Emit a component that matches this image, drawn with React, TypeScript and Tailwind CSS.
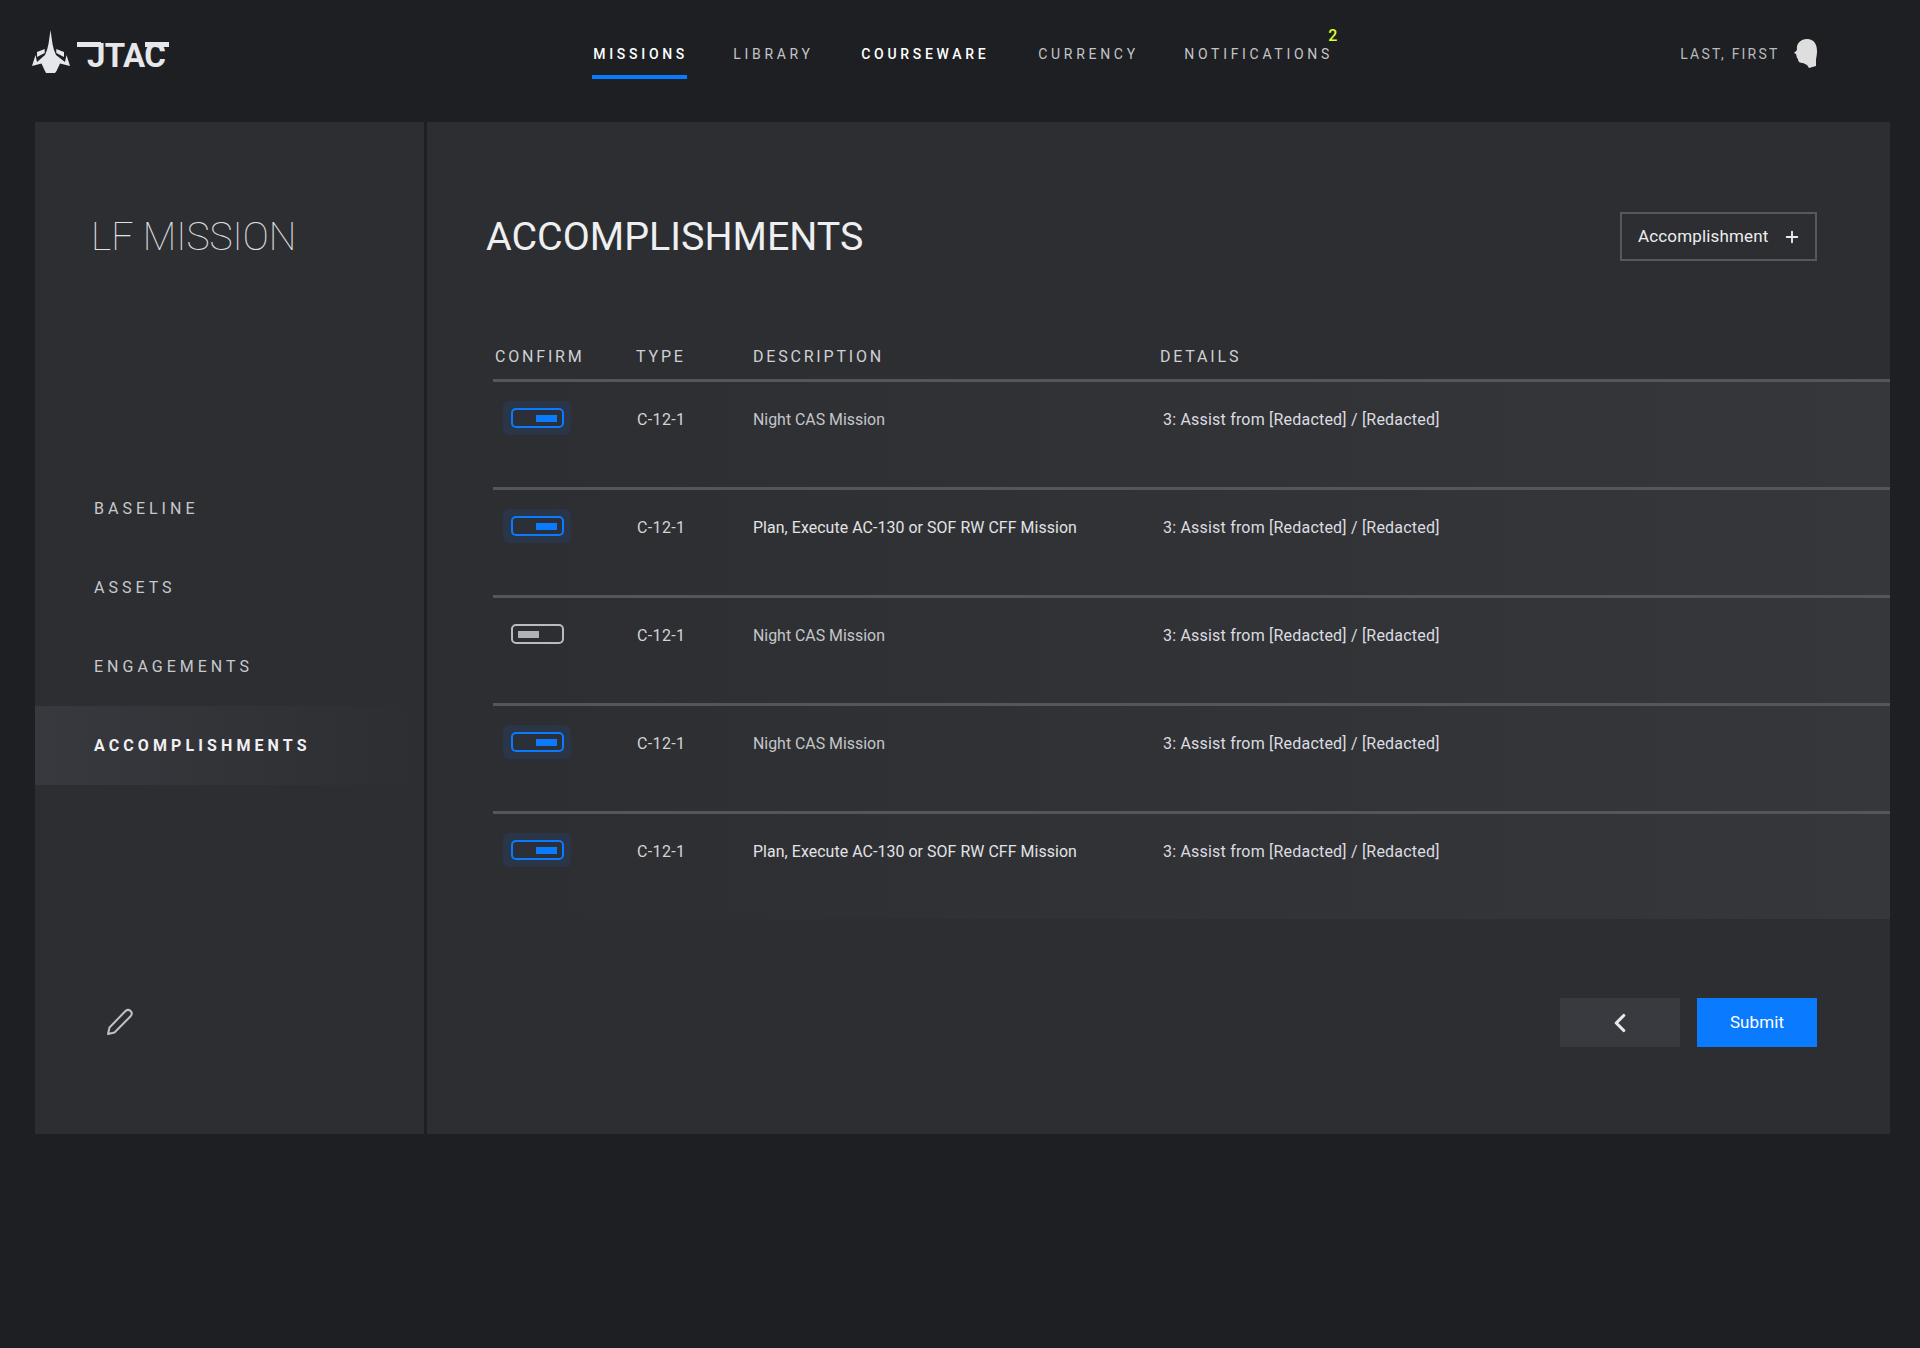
import React from 'react';
import { Plus, ChevronLeft } from 'lucide-react';

const FONT = "font-['Roboto',sans-serif]";

const navItems = [
  { label: 'MISSIONS', className: 'w-[94px] font-medium text-white' },
  { label: 'LIBRARY', className: 'w-[82px] text-[#c4c5c8]' },
  { label: 'COURSEWARE', className: 'w-[131px] font-medium text-white' },
  { label: 'CURRENCY', className: 'w-[100px] text-[#c4c5c8]' },
  { label: 'NOTIFICATIONS', className: 'w-[149px] text-[#c4c5c8]' },
];

const sideItems = ['BASELINE', 'ASSETS', 'ENGAGEMENTS'];

const rows = [
  { on: true, desc: 'Night CAS Mission', dim: true },
  { on: true, desc: 'Plan, Execute AC-130 or SOF RW CFF Mission', dim: false },
  { on: false, desc: 'Night CAS Mission', dim: true },
  { on: true, desc: 'Night CAS Mission', dim: true },
  { on: true, desc: 'Plan, Execute AC-130 or SOF RW CFF Mission', dim: false },
];

const Toggle: React.FC<{ on: boolean }> = ({ on }) => (
  <div
    className={`flex h-[34px] w-[68px] items-center justify-center rounded-[6px] ${
      on ? 'bg-[#2a3547]' : ''
    }`}
  >
    <div
      className={`flex h-[20px] w-[53px] items-center rounded-[5px] border-2 px-[5px] ${
        on ? 'justify-end border-[#0a7aff] bg-[#2b3038]' : 'justify-start border-[#b9bbbf]'
      }`}
    >
      <div className={`h-[7px] w-[21px] ${on ? 'bg-[#0a7aff]' : 'bg-[#b0b2b6]'}`} />
    </div>
  </div>
);

const Logo = () => (
  <div className="flex items-center">
    <svg width="38" height="43" viewBox="0 0 38 43" className="text-[#e6e7ea]">
      <path
        fill="currentColor"
        d="M18.5 0 L20.5 14 L22 20 L24 25 L33 32 L34.5 25 L38 36 L28 33.5 L24.5 41 L23 43 L14 43 L12 39 L9.5 33.5 L0 36 L3.5 25 L5 32 L13 25 L15 20 L16.5 14 Z"
      />
      <path fill="currentColor" d="M5 22 L12.7 19 L12.7 23 L5 27 Z M32 22 L24.3 19 L24.3 23 L32 27 Z" />
    </svg>
    <span className="relative mt-[7px] ml-[7px] text-[33px] leading-none font-bold tracking-[-0.6px] text-[#e6e7ea] font-['Roboto',sans-serif]">
      <span className="ml-[10px]">JTAC</span>
      <span className="absolute top-[3px] left-0 h-[5px] w-[24px] bg-[#e6e7ea]" />
      <span className="absolute top-[3px] right-[-4px] h-[5px] w-[24px] bg-[#e6e7ea]" />
    </span>
  </div>
);

const Head = () => (
  <svg width="24" height="30" viewBox="0 0 24 30">
    <path
      fill="#dedede"
      d="M3 11 C2 4 7 0 13 0 C20 0 23 5 23 12 C23 17 22 19 22 22 L22 27 L15 29 L13 26 L9 24 C6 24 4 23 4 20 L3 19 L2 15 L0 14 Z"
    />
  </svg>
);

const Pencil = () => (
  <svg width="28" height="28" viewBox="0 0 28 28" fill="none" stroke="#bfc0c3" strokeWidth="2">
    <path d="M2 26 L3.5 19.5 L19.5 3 C21 1.6 23 1.6 24.6 3 C26 4.4 26 6.5 24.8 8 L8.5 24.5 Z" strokeLinejoin="round" />
  </svg>
);

export default function App() {
  return (
    <div className={`h-[1348px] w-[1920px] bg-[#1e1f23] ${FONT}`}>
      {/* Top bar */}
      <header className="relative flex h-[122px] items-start pt-[30px] pl-[32px]">
        <Logo />
        <nav className="ml-[428px] flex gap-[46px] pt-[14px]">
          {navItems.map((item, i) => (
            <div
              key={item.label}
              className={`relative pb-[15px] text-[14px] leading-[20px] tracking-[3.7px] whitespace-nowrap ${item.className}`}
            >
              {item.label}
              {i === 0 && <div className="absolute right-[0px] bottom-0 left-[-1px] h-[4px] bg-[#0a7aff]" />}
              {i === 4 && (
                <span className="absolute top-[-15px] right-[-4px] text-[16px] leading-[14px] font-medium tracking-normal text-[#dfff2a]">
                  2
                </span>
              )}
            </div>
          ))}
        </nav>
        <div className="ml-[347px] flex items-center gap-[14px] pt-[9px]">
          <span className="text-[14px] leading-[20px] tracking-[2.2px] whitespace-nowrap text-[#b9babd]">
            LAST, FIRST
          </span>
          <Head />
        </div>
      </header>

      {/* Card */}
      <div className="ml-[35px] flex h-[1012px] w-[1855px] bg-[#2d2e32]">
        <aside className="flex w-[389px] shrink-0 flex-col">
          <h2 className="mt-[91px] ml-[56px] text-[39px] leading-[48px] font-thin text-[#e2e3e5]">
            LF MISSION
          </h2>
          <div className="mt-[208px] flex flex-col">
            {sideItems.map((label) => (
              <div key={label} className="flex h-[79px] items-center pl-[59px] text-[16px] tracking-[4px] text-[#c8c9cc]">
                {label}
              </div>
            ))}
            <div className="flex h-[79px] items-center bg-gradient-to-r from-[#38393e] to-[#2d2e32] pl-[59px] text-[16px] font-bold tracking-[4.1px] text-[#f0f0f2]">
              ACCOMPLISHMENTS
            </div>
          </div>
          <div className="mt-[223px] ml-[71px]">
            <Pencil />
          </div>
        </aside>

        <div className="w-[3px] shrink-0 bg-[#1e1f23]" />

        <main className="flex flex-1 flex-col">
          <div className="flex items-start justify-between pt-[91px] pr-[73px] pl-[59px]">
            <h1 className="text-[39.4px] leading-[48px] font-normal text-[#eeeff1]">ACCOMPLISHMENTS</h1>
            <button className="mt-[-1px] flex h-[49px] w-[197px] items-center justify-between border-2 border-[#55585e] pr-[14px] pl-[16px] text-[17px] tracking-[0.15px] text-[#eceded]">
              Accomplishment
              <Plus size={18} strokeWidth={2.5} />
            </button>
          </div>

          <div className="mt-[85px] ml-[66px]">
            <div className="flex h-[22px] items-center pl-[2px] text-[16px] tracking-[2.8px] text-[#d0d1d4]">
              <div className="w-[141px]">CONFIRM</div>
              <div className="w-[117px]">TYPE</div>
              <div className="w-[407px]">DESCRIPTION</div>
              <div>DETAILS</div>
            </div>
            <div className="mt-[11px] bg-gradient-to-r from-[#2d2e32] to-[#36373b]">
              {rows.map((row, i) => (
                <div
                  key={i}
                  className="flex h-[108px] items-start border-t-[3px] border-[#54565c] pt-[19px] text-[16px] leading-[38px]"
                >
                  <div className="w-[143px] pl-[10px]">
                    <Toggle on={row.on} />
                  </div>
                  <div className="w-[117px] pl-[1px] tracking-[0.35px] text-[#d2d3d6]">C-12-1</div>
                  <div className={`w-[407px] text-[15.9px] ${row.dim ? 'text-[#c4c5c8]' : 'text-[#e2e3e5] tracking-[0.07px]'}`}>{row.desc}</div>
                  <div className="pl-[3px] tracking-[0.2px] text-[#dcdde0]">3: Assist from [Redacted] / [Redacted]</div>
                </div>
              ))}
            </div>
          </div>

          <div className="mt-[79px] flex justify-end gap-[17px] pr-[73px]">
            <button className="flex h-[49px] w-[120px] items-center justify-center bg-[#383a3f] text-[#e8e9ea]">
              <ChevronLeft size={30} strokeWidth={2.5} />
            </button>
            <button className="h-[49px] w-[120px] bg-[#0a7aff] text-[17px] tracking-[0.1px] text-white">Submit</button>
          </div>
        </main>
      </div>
    </div>
  );
}
